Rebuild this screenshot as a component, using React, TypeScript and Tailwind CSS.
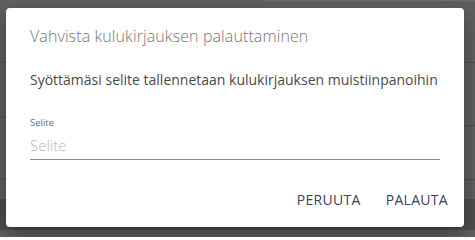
export default function App() {
  return (
    <div
      className="relative w-[475px] h-[237px] overflow-hidden bg-[#5f5f5f]"
      style={{ fontFamily: '"Open Sans", "Noto Sans", sans-serif' }}
    >
      {/* page content behind the overlay */}
      <div className="h-[3px] ml-[265px] bg-[#6a6a6a] border-b border-[#555]" />
      <div className="h-[60px] border-b border-[#505050]" />
      <div className="flex">
        <div className="w-1/2 h-[54px] border-b border-[#505050]" />
        <div className="w-1/2 h-[63px] border-b border-[#505050]" />
      </div>
      <div className="h-[63px] -mt-[9px] border-b border-[#505050]" />
      <div className="h-[20px] border-b border-[#505050]" />
      <div className="h-[30px] bg-[#4e4e4e]" />

      {/* dialog */}
      <div className="absolute left-[6px] top-[8px] w-[458px] h-[219px] bg-white rounded-[4px] shadow-[0_8px_20px_rgba(0,0,0,0.35)] flex flex-col">
        <h2 className="px-6 pt-[16px] text-[16px] leading-[24px] font-light text-[#767676] tracking-[0.1px]">
          Vahvista kulukirjauksen palauttaminen
        </h2>
        <p className="px-6 mt-[22px] text-[14px] leading-[20px] text-[#4a4a4a]">
          Syöttämäsi selite tallennetaan kulukirjauksen muistiinpanoihin
        </p>
        <div className="mx-6 mt-[27px] w-[410px] flex flex-col">
          <label className="text-[9.5px] leading-[12px] text-[#6d6d6d]">Selite</label>
          <div className="mt-[6px] pb-[4px] border-b border-[#8a8a8a] text-[15px] leading-[20px] font-light text-[#b5b5b5]">
            Selite
          </div>
        </div>
        <div className="mt-auto mb-[10px] flex justify-end gap-[9px] pr-[8px]">
          <button className="px-[8px] h-[36px] text-[14px] text-[#3d4160] tracking-[0.3px]">PERUUTA</button>
          <button className="px-[8px] h-[36px] text-[14px] text-[#3d4160] tracking-[0.3px]">PALAUTA</button>
        </div>
      </div>
    </div>
  );
}
